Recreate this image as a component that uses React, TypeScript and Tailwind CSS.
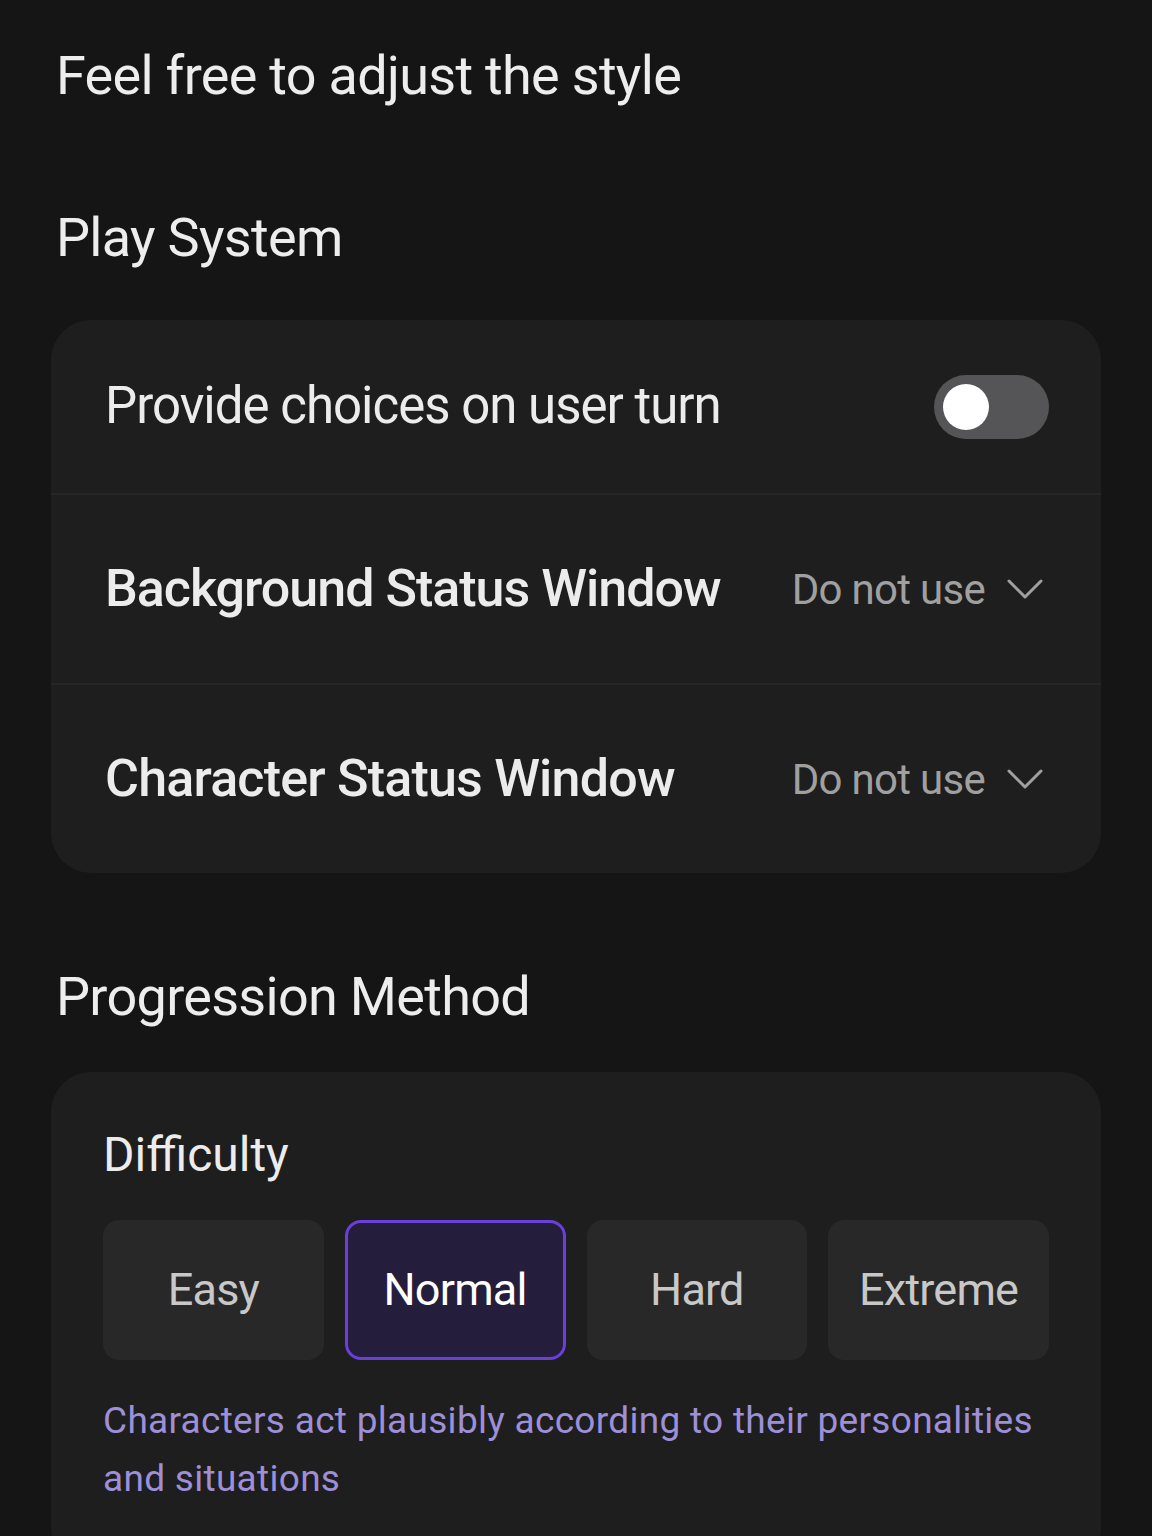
const difficulties = ["Easy", "Normal", "Hard", "Extreme"];

function Chevron() {
  return (
    <svg width="36" height="22" viewBox="0 0 36 22" fill="none" className="text-[#a0a0a0]">
      <polyline points="2,3 18,19 34,3" stroke="currentColor" strokeWidth="3" strokeLinecap="round" strokeLinejoin="round" />
    </svg>
  );
}

function SelectRow({ label, tracking }: { label: string; tracking: string }) {
  return (
    <div className="flex h-[190px] items-center justify-between border-t-2 border-[#262626] pl-[54px] pr-[58px]">
      <span className={`text-[52px] font-medium text-[#ececec] ${tracking}`}>{label}</span>
      <div className="flex items-center gap-[22px] text-[#a0a0a0]">
        <span className="text-[42px] tracking-[-0.7px]">Do not use</span>
        <Chevron />
      </div>
    </div>
  );
}

export default function App() {
  const selected = "Normal";

  return (
    <div
      className="min-h-[1536px] w-[1152px] overflow-hidden bg-[#151515] px-[51px] pt-[40px]"
      style={{ fontFamily: "Roboto, 'Noto Sans', sans-serif" }}
    >
      <h1 className="pl-[5px] text-[54px] font-normal leading-[72px] tracking-[-0.7px] text-[#ededed]">
        Feel free to adjust the style
      </h1>

      <h2 className="mt-[90px] pl-[5px] text-[54px] font-normal leading-[72px] tracking-[-0.7px] text-[#ededed]">
        Play System
      </h2>

      <div className="mt-[46px] overflow-hidden rounded-[40px] bg-[#1e1e1e]">
        <div className="flex h-[173px] items-center justify-between pl-[54px] pr-[52px]">
          <span className="text-[51px] tracking-[-1px] text-[#ececec]">Provide choices on user turn</span>
          <button className="flex h-[64px] w-[115px] items-center rounded-full bg-[#555558] pl-[9px]">
            <span className="h-[46px] w-[46px] rounded-full bg-white" />
          </button>
        </div>
        <SelectRow label="Background Status Window" tracking="tracking-[-1px]" />
        <SelectRow label="Character Status Window" tracking="tracking-[-0.8px]" />
      </div>

      <h2 className="mt-[88px] pl-[5px] text-[54px] font-normal leading-[72px] tracking-[-0.7px] text-[#ededed]">
        Progression Method
      </h2>

      <div className="mt-[39px] rounded-[40px] bg-[#1e1e1e] px-[52px] pb-[60px] pt-[51px]">
        <div className="text-[48px] leading-[64px] text-[#ececec]">Difficulty</div>
        <div className="mt-[33px] grid grid-cols-4 gap-[21px]">
          {difficulties.map((d) =>
            d === selected ? (
              <button
                key={d}
                className="flex h-[140px] items-center justify-center rounded-[16px] border-[3px] border-[#6b3fdc] bg-[#241d3c] text-[45px] tracking-[-0.8px] text-white"
              >
                {d}
              </button>
            ) : (
              <button
                key={d}
                className="flex h-[140px] items-center justify-center rounded-[16px] bg-[#282828] text-[45px] tracking-[-0.8px] text-[#c8c8c8]"
              >
                {d}
              </button>
            )
          )}
        </div>
        <p className="mt-[32px] text-[37px] leading-[58px] tracking-[0.3px] text-[#9d8fd8]">
          Characters act plausibly according to their personalities and situations
        </p>
      </div>
    </div>
  );
}
